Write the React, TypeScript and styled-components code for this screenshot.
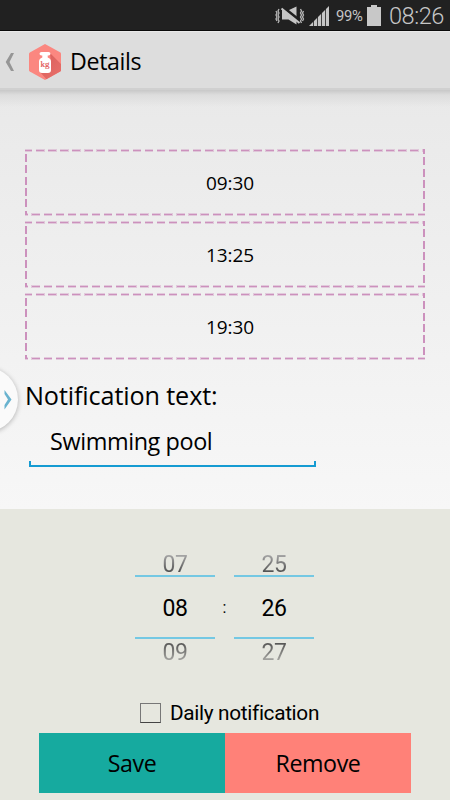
import React from "react";
import styled, { createGlobalStyle } from "styled-components";

const GlobalStyle = createGlobalStyle`
  * { box-sizing: border-box; }
  body { margin: 0; background: #e6e7df; }
`;

const Screen = styled.div`
  width: 450px;
  height: 800px;
  overflow: hidden;
  position: relative;
  display: flex;
  flex-direction: column;
  color: #000;
  font-family: "Open Sans", "Noto Sans", sans-serif;
`;

const StatusBar = styled.header`
  height: 31px;
  flex: none;
  display: flex;
  justify-content: flex-end;
  background: #212121;
  border-bottom: 1px solid #090909;
  color: #c6c6c6;
  font-family: Roboto, sans-serif;
  white-space: nowrap;
`;

const StatusIcons = styled.svg`
  width: 60px;
  height: 30px;
  flex: none;
`;

const Percent = styled.span`
  width: 31px;
  margin-left: 1px;
  font-size: 14.8px;
  line-height: 33px;
  letter-spacing: -0.3px;
`;

const Battery = styled.svg`
  width: 15px;
  height: 30px;
`;

const Clock = styled.span`
  width: 68px;
  padding-left: 7px;
  font-size: 23.6px;
  font-weight: 300;
  line-height: 32px;
  letter-spacing: -0.5px;
`;

const ActionBar = styled.div`
  height: 59px;
  flex: none;
  display: flex;
  align-items: center;
  background: #ddd;
  border-top: 1px solid #e8e8e8;
  border-bottom: 2px solid #d0d0d0;
  padding: 3px 0 0 5px;
`;

const BackIcon = styled.svg`
  width: 10px;
  height: 20px;
`;

const AppIcon = styled.svg`
  width: 34px;
  height: 38px;
  margin: 1px 0 0 13px;
`;

const Title = styled.h1`
  margin: 0 0 1px 8px;
  font-size: 23.2px;
  letter-spacing: -0.35px;
  font-weight: 400;
  line-height: 34px;
`;

const Content = styled.main`
  height: 419px;
  flex: none;
  padding: 59px 25px 0;
  background:
    linear-gradient(#c8c8c8, #dadadacc 5px, rgba(225, 225, 225, 0)) 0 0 / 100% 17px no-repeat,
    linear-gradient(#e9e9e9, #f7f7f7);
`;

const TimeList = styled.div`
  display: flex;
  flex-direction: column;
  gap: 5px;
`;

const horizontal = (start: number) =>
  `repeating-linear-gradient(90deg, #cc91bd 0 8px, transparent 8px 12.07px) ${start}px`;
const softHorizontal = (start: number) =>
  `repeating-linear-gradient(90deg, #cc91bd66 0 8.5px, transparent 8.5px 12.07px) ${start}px`;

const TimeRow = styled.div`
  height: 67px;
  display: flex;
  align-items: center;
  justify-content: center;
  padding: 1px 0 0 10px;
  font-size: 19px;
  letter-spacing: -0.1px;
  line-height: 26px;
  background:
    ${horizontal(-0.8)} 1px / 412px 1px no-repeat,
    ${softHorizontal(-1)} 0 / 412px 3px no-repeat,
    ${horizontal(-5.4)} 65px / 412px 1px no-repeat,
    ${softHorizontal(-5.6)} 64px / 412px 3px no-repeat,
    repeating-linear-gradient(180deg, #cc91bd 0 8px, transparent 8px 11.35px) 0 5px / 2px 61px no-repeat,
    repeating-linear-gradient(180deg, #cc91bd 0 8px, transparent 8px 11.35px) 398px -3px / 2px 67px no-repeat;
`;

const Label = styled.label`
  display: block;
  margin-top: 17px;
  font-size: 25.2px;
  letter-spacing: -0.12px;
  line-height: 36px;
  white-space: nowrap;
`;

const Field = styled.div`
  width: 288px;
  height: 50px;
  margin: 4px 0 0 3px;
  padding-left: 22px;
  font-size: 23.4px;
  letter-spacing: -0.4px;
  line-height: 48px;
  background:
    linear-gradient(#159bd2, #159bd2) 1px 48px / 287px 2px no-repeat,
    linear-gradient(#159bd2, #159bd2) 1px 44px / 2px 5px no-repeat,
    linear-gradient(#159bd2, #159bd2) 286px 44px / 2px 5px no-repeat;
`;

const DrawerHandle = styled.div`
  position: absolute;
  left: -47px;
  top: 367px;
  width: 65px;
  height: 65px;
  border-radius: 50%;
  background: #fafafa;
  box-shadow: 0 1px 5px rgba(0, 0, 0, 0.28);
  display: flex;
  align-items: center;
  justify-content: flex-end;
  padding-right: 6px;
`;

const Panel = styled.section`
  flex: 1;
  background: #e6e7df;
  padding: 45px 39px 0;
  font-family: Roboto, sans-serif;
`;

const Picker = styled.div`
  display: flex;
  justify-content: center;
  align-items: center;
  height: 108px;
  padding-right: 1px;
`;

const Colon = styled.span`
  width: 19px;
  text-align: center;
  font-size: 16px;
  line-height: 20px;
`;

const Wheel = styled.div`
  width: 80px;
  height: 108px;
  font-size: 23px;
  letter-spacing: -0.5px;
  text-align: center;
`;

const Faded = styled.div<{ $upper?: boolean }>`
  height: ${(p) => (p.$upper ? "21px" : "24px")};
  line-height: ${(p) => (p.$upper ? "22px" : "28px")};
  color: transparent;
  background: linear-gradient(${(p) => (p.$upper ? "#aaa, #444" : "#444, #b0b0ac")});
  background-clip: text;
  -webkit-background-clip: text;
`;

const Current = styled.div`
  height: 64px;
  border-top: 2px solid #74c8e3;
  border-bottom: 2px solid #74c8e3;
  line-height: 64px;
`;

const Daily = styled.div`
  display: flex;
  align-items: center;
  height: 24px;
  margin: 39px 0 0 101px;
  gap: 9px;
  font-size: 20.8px;
  letter-spacing: -0.33px;
  line-height: 26px;
  white-space: nowrap;
`;

const Checkbox = styled.span`
  width: 21px;
  height: 20px;
  flex: none;
  border: 1px solid #777;
  border-bottom-color: #444;
`;

const Actions = styled.div`
  display: flex;
  height: 60px;
  margin-top: 8px;
`;

const ActionButton = styled.button<{ $bg: string }>`
  width: 186px;
  border: 0;
  padding: 0 0 1px;
  background: ${(p) => p.$bg};
  color: #000;
  font: 400 23.2px/32px "Open Sans", "Noto Sans", sans-serif;
  letter-spacing: -0.4px;
`;

const NumberWheel = ({ values }: { values: string[] }) => (
  <Wheel>
    <Faded $upper>{values[0]}</Faded>
    <Current>{values[1]}</Current>
    <Faded>{values[2]}</Faded>
  </Wheel>
);

export default function App() {
  return (
    <>
      <GlobalStyle />
      <Screen>
        <StatusBar>
          <StatusIcons viewBox="275 0 60 30">
            <g fill="none" stroke="#b8b8b8" strokeWidth="1.3">
              <path d="M276 11l1 2-1 2 1 2-1 2 1 2M279 9l-1 2 1 2-1 2 1 2-1 2 1 2-1 2M303.500 11l-1 2 1 2-1 2 1 2-1 2M300.500 9l1 2-1 2 1 2-1 2 1 2-1 2 1 2" />
            </g>
            <path fill="#c6c6c6" d="M282 10h7l7.500-3.500v18l-8-5H282z" />
            <path d="M282 6.500l17.500 14" stroke="#212121" strokeWidth="3" />
            <path d="M281.500 8.500l18 14.500" stroke="#c6c6c6" strokeWidth="2" />
            <path fill="#c6c6c6" d="M309 26L329 6v20z" />
            <path d="M313.5 21v5M317.500 17v9M321.500 13v13M325.500 9v17" stroke="#212121" strokeWidth=".8" />
          </StatusIcons>
          <Percent>99%</Percent>
          <Battery viewBox="0 0 15 30">
            <path fill="#c8c8c8" d="M4 5h6v2h4v19H0V7h4z" />
          </Battery>
          <Clock>08:26</Clock>
        </StatusBar>
        <ActionBar>
          <BackIcon viewBox="0 0 10 20">
            <path d="M6 1H9L4.500 10 9 19H6L.7 10z" fill="#969696" />
          </BackIcon>
          <AppIcon viewBox="0 0 34 38">
            <defs>
              <clipPath id="hexagon">
                <path d="M17 1L32.5 9.5Q33 10 33 11v16q0 1-.8 1.5L17 37 1.8 28.5Q1 28 1 27V11q0-1 .8-1.5z" />
              </clipPath>
              <linearGradient id="shade" x2="1" y2="1">
                <stop stopColor="#d75e5a" />
                <stop offset="1" stopColor="#ea716c" />
              </linearGradient>
            </defs>
            <g clipPath="url(#hexagon)">
              <path fill="#fb8780" d="M0 0h34v38H0z" />
              <path fill="url(#shade)" d="M22 10l12 12v16H20l-8-9 11-8z" />
            </g>
            <path
              fill="#fff"
              d="M13.5 9h7q2 0 2 1.8t-2 1.8h-.8v2q3.3 1 3.3 4v8.5q0 3-3 3h-6q-3 0-3-3v-8.500q0-3 3.300-4v-2h-.8q-2 0-2-1.800t2-1.800z"
            />
            <text x="17" y="24" textAnchor="middle" fontFamily="Liberation Serif, serif" fontSize="9" fill="#e25755" stroke="#e25755" strokeWidth=".2">
              kg
            </text>
          </AppIcon>
          <Title>Details</Title>
        </ActionBar>
        <Content>
          <TimeList>
            {["09:30", "13:25", "19:30"].map((time) => (
              <TimeRow key={time}>{time}</TimeRow>
            ))}
          </TimeList>
          <Label>Notification text:</Label>
          <Field>Swimming pool</Field>
        </Content>
        <Panel>
          <Picker>
            <NumberWheel values={["07", "08", "09"]} />
            <Colon>:</Colon>
            <NumberWheel values={["25", "26", "27"]} />
          </Picker>
          <Daily>
            <Checkbox />
            <span>Daily notification</span>
          </Daily>
          <Actions>
            <ActionButton $bg="#16aa9f">Save</ActionButton>
            <ActionButton $bg="#ff8178">Remove</ActionButton>
          </Actions>
        </Panel>
        <DrawerHandle>
          <svg width="8" height="20" viewBox="0 0 8 20">
            <path d="M.5 0L7.500 9.500.500 19.500V15L4 9.500.500 4z" fill="#69b3cf" />
          </svg>
        </DrawerHandle>
      </Screen>
    </>
  );
}
